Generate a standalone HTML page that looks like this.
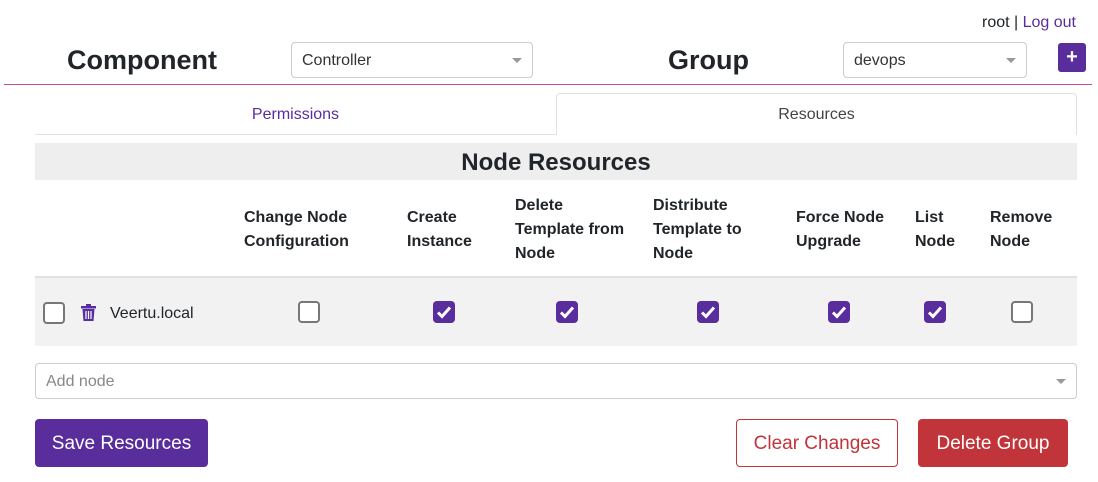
<!DOCTYPE html>
<html><head><style>
*{box-sizing:border-box;margin:0;padding:0}
body{width:1098px;height:482px;background:#fff;font-family:"Liberation Sans",sans-serif;color:#212529;position:relative;overflow:hidden}
.a{position:absolute}
.sel{position:absolute;border:1px solid #ccc;border-radius:4px;background:#fff;font-size:16px;padding-left:10px;padding-top:2px;display:flex;align-items:center;color:#333}
.sel:after{content:"";position:absolute;right:10px;top:50%;margin-top:-2px;border-left:5px solid transparent;border-right:5px solid transparent;border-top:5px solid #999}
.h{font-size:16px;font-weight:bold;line-height:24px;position:absolute}
.cb{position:absolute;width:22px;height:22px;border-radius:4px}
.off{border:2px solid #777;background:#fff}
.on{background:#5a2d9c}
.on svg{display:block}
</style></head><body>
<div class="a" style="right:22px;top:14px;font-size:16px">root | <span style="color:#5a2d9c">Log out</span></div>
<div class="a" style="left:67px;top:45px;font-size:27px;font-weight:bold">Component</div>
<div class="sel" style="left:291px;top:42px;width:242px;height:36px">Controller</div>
<div class="a" style="left:668px;top:45px;font-size:27px;font-weight:bold">Group</div>
<div class="sel" style="left:843px;top:42px;width:184px;height:36px">devops</div>
<div class="a" style="left:1058px;top:43px;width:28px;height:29px;background:#5a2d9c;border-radius:3px;color:#fff;font-weight:bold;font-size:20px;text-align:center;line-height:28px">+</div>
<div class="a" style="left:4px;top:84px;width:1088px;height:1px;background:#c04f9a"></div>
<div class="a" style="left:35px;top:134px;width:521px;height:1px;background:#dee2e6"></div>
<div class="a" style="left:35px;top:106px;width:521px;text-align:center;font-size:16px;color:#5a2d9c">Permissions</div>
<div class="a" style="left:556px;top:93px;width:521px;height:42px;border:1px solid #dee2e6;border-bottom:none;border-radius:4px 4px 0 0;text-align:center;font-size:16px;line-height:42px;color:#444">Resources</div>
<div class="a" style="left:35px;top:143px;width:1042px;height:37px;background:#eee;text-align:center;font-size:24px;font-weight:bold;line-height:40px">Node Resources</div>
<div class="h" style="left:244px;top:206px">Change Node<br>Configuration</div>
<div class="h" style="left:407px;top:206px">Create<br>Instance</div>
<div class="h" style="left:515px;top:194px">Delete<br>Template from<br>Node</div>
<div class="h" style="left:653px;top:194px">Distribute<br>Template to<br>Node</div>
<div class="h" style="left:796px;top:206px">Force Node<br>Upgrade</div>
<div class="h" style="left:915px;top:206px">List<br>Node</div>
<div class="h" style="left:990px;top:206px">Remove<br>Node</div>
<div class="a" style="left:35px;top:276px;width:1042px;height:2px;background:#dee2e6"></div>
<div class="a" style="left:35px;top:278px;width:1042px;height:68px;background:#f2f2f2"></div>
<div class="cb off" style="left:43px;top:302px"></div>
<svg class="a" style="left:81px;top:304px" width="15" height="17" viewBox="0 0 15 17"><rect x="0" y="2" width="15" height="2.5" fill="#5a2d9c"/><rect x="5" y="0" width="5" height="3" fill="#5a2d9c"/><path d="M1.5 5h12l-1 12h-10z" fill="#5a2d9c"/><path d="M5 7v8M7.5 7v8M10 7v8" stroke="#fff" stroke-width="1.2"/></svg>
<div class="a" style="left:110px;top:305px;font-size:16px">Veertu.local</div>
<div class="cb off" style="left:298px;top:301px"></div>
<div class="cb on" style="left:433px;top:301px"><svg width="22" height="22"><path d="M5 11.5l4 4 8-9" stroke="#fff" stroke-width="3" fill="none"/></svg></div>
<div class="cb on" style="left:556px;top:301px"><svg width="22" height="22"><path d="M5 11.5l4 4 8-9" stroke="#fff" stroke-width="3" fill="none"/></svg></div>
<div class="cb on" style="left:697px;top:301px"><svg width="22" height="22"><path d="M5 11.5l4 4 8-9" stroke="#fff" stroke-width="3" fill="none"/></svg></div>
<div class="cb on" style="left:828px;top:301px"><svg width="22" height="22"><path d="M5 11.5l4 4 8-9" stroke="#fff" stroke-width="3" fill="none"/></svg></div>
<div class="cb on" style="left:924px;top:301px"><svg width="22" height="22"><path d="M5 11.5l4 4 8-9" stroke="#fff" stroke-width="3" fill="none"/></svg></div>
<div class="cb off" style="left:1011px;top:301px"></div>
<div class="sel" style="left:35px;top:363px;width:1042px;height:36px;color:#888">Add node</div>
<div class="a" style="left:35px;top:419px;width:173px;height:48px;background:#5a2d9c;border-radius:4px;color:#fff;font-size:19px;text-align:center;line-height:50px">Save Resources</div>
<div class="a" style="left:736px;top:419px;width:162px;height:48px;border:1px solid #c0343a;border-radius:4px;color:#c0343a;font-size:19px;text-align:center;line-height:48px">Clear Changes</div>
<div class="a" style="left:918px;top:419px;width:150px;height:48px;background:#c0343a;border-radius:4px;color:#fff;font-size:19px;text-align:center;line-height:50px">Delete Group</div>
</body></html>
